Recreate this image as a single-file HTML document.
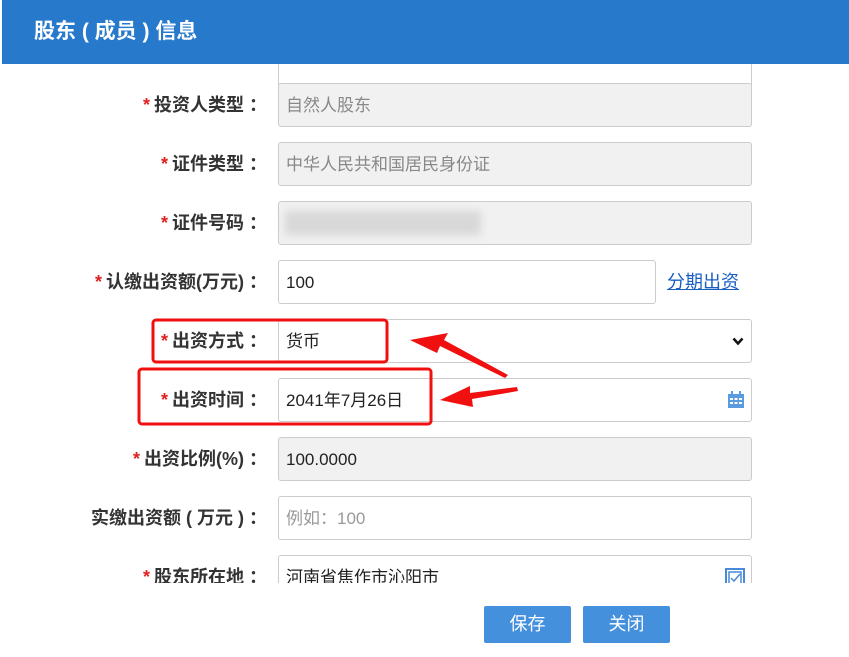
<!DOCTYPE html>
<html><head><meta charset="utf-8"><style>
body{margin:0;width:849px;height:657px;background:#fff;position:relative;overflow:hidden;font-family:"Liberation Sans","Noto Sans CJK SC",sans-serif}
.hd{position:absolute;left:2px;top:0;width:847px;height:64px;background:#2779cc;color:#fff;font-size:21px;font-weight:bold;line-height:64px;padding-left:32px;box-sizing:border-box}
.sc{position:absolute;left:0;top:64px;width:849px;height:519px;overflow:hidden}
.lb{position:absolute;right:582px;width:320px;text-align:right;font-size:18px;font-weight:bold;color:#333;line-height:44px}
.lb i{color:#e02020;font-style:normal;margin-right:4px}
.in{position:absolute;left:278px;width:474px;height:44px;box-sizing:border-box;border:1px solid #ccc;border-radius:3px;background:#fff;font-size:17px;line-height:44px;padding-left:7px;color:#222}
.g{background:#f1f1f1;color:#888}
.btn{position:absolute;top:606px;height:37px;width:87px;background:#4590dd;color:#fff;font-size:18px;text-align:center;line-height:37px;border-radius:2px}
</style></head><body>
<div class="hd">股东 ( 成员 ) 信息</div>
<div class="sc">
<div class="in" style="top:-20px"></div>
<div class="lb" style="top:19px"><i>*</i>投资人类型 ：</div><div class="in g" style="top:19px">自然人股东</div>
<div class="lb" style="top:78px"><i>*</i>证件类型 ：</div><div class="in g" style="top:78px">中华人民共和国居民身份证</div>
<div class="lb" style="top:137px"><i>*</i>证件号码 ：</div><div class="in g" style="top:137px"><div style="position:absolute;left:6px;top:9px;width:196px;height:24px;background:#d8d8d8;filter:blur(4px)"></div></div>
<div class="lb" style="top:196px"><i>*</i>认缴出资额(万元) ：</div><div class="in" style="top:196px;width:378px">100</div>
<div style="position:absolute;left:667px;top:196px;line-height:44px;font-size:18px;color:#1a5fc0;text-decoration:underline">分期出资</div>
<div class="lb" style="top:255px"><i>*</i>出资方式 ：</div><div class="in" style="top:255px">货币<svg style="position:absolute;right:7px;top:17px" width="12" height="9" viewBox="0 0 12 9"><path d="M1.5 1.5 L6 6.5 L10.5 1.5" fill="none" stroke="#111" stroke-width="2.5"/></svg></div>
<div class="lb" style="top:314px"><i>*</i>出资时间 ：</div><div class="in" style="top:314px">2041年7月26日
<svg style="position:absolute;right:6px;top:12px" width="18" height="18" viewBox="0 0 18 18"><rect x="1" y="3" width="16" height="14" fill="#5a9ae0"/><rect x="4" y="0" width="2" height="4" fill="#5a9ae0"/><rect x="12" y="0" width="2" height="4" fill="#5a9ae0"/><g fill="#fff"><rect x="3" y="7" width="3" height="2"/><rect x="7.5" y="7" width="3" height="2"/><rect x="12" y="7" width="3" height="2"/><rect x="3" y="11" width="3" height="2"/><rect x="7.5" y="11" width="3" height="2"/><rect x="12" y="11" width="3" height="2"/></g></svg></div>
<div class="lb" style="top:373px"><i>*</i>出资比例(%) ：</div><div class="in g" style="top:373px;color:#222">100.0000</div>
<div class="lb" style="top:432px">实缴出资额 ( 万元 ) ：</div><div class="in" style="top:432px;color:#999">例如：100</div>
<div class="lb" style="top:491px"><i>*</i>股东所在地 ：</div><div class="in" style="top:491px">河南省焦作市沁阳市<svg style="position:absolute;right:6px;top:12px" width="20" height="20" viewBox="0 0 20 20"><rect x="1" y="1" width="18" height="18" fill="none" stroke="#4a8ad8" stroke-width="2"/><rect x="4" y="4" width="12" height="12" fill="none" stroke="#4a8ad8" stroke-width="1.5"/><path d="M6 10 L9 13 L15 6" fill="none" stroke="#4a8ad8" stroke-width="1.5"/></svg></div>
</div>
<svg style="position:absolute;left:0;top:0" width="849" height="657">
<rect x="153" y="320" width="234" height="42" rx="3" fill="none" stroke="#f01010" stroke-width="3"/>
<rect x="139" y="369" width="292" height="55" rx="3" fill="none" stroke="#f01010" stroke-width="3"/>
<polygon points="410,340 448,333 444,340 508,375 505,378 440,346 437,353" fill="#f01010"/>
<polygon points="440,400 470,386 470,393 517,387 518,391 472,399 473,407" fill="#f01010"/>
</svg>
<div class="btn" style="left:484px">保存</div>
<div class="btn" style="left:583px">关闭</div>
</body></html>
